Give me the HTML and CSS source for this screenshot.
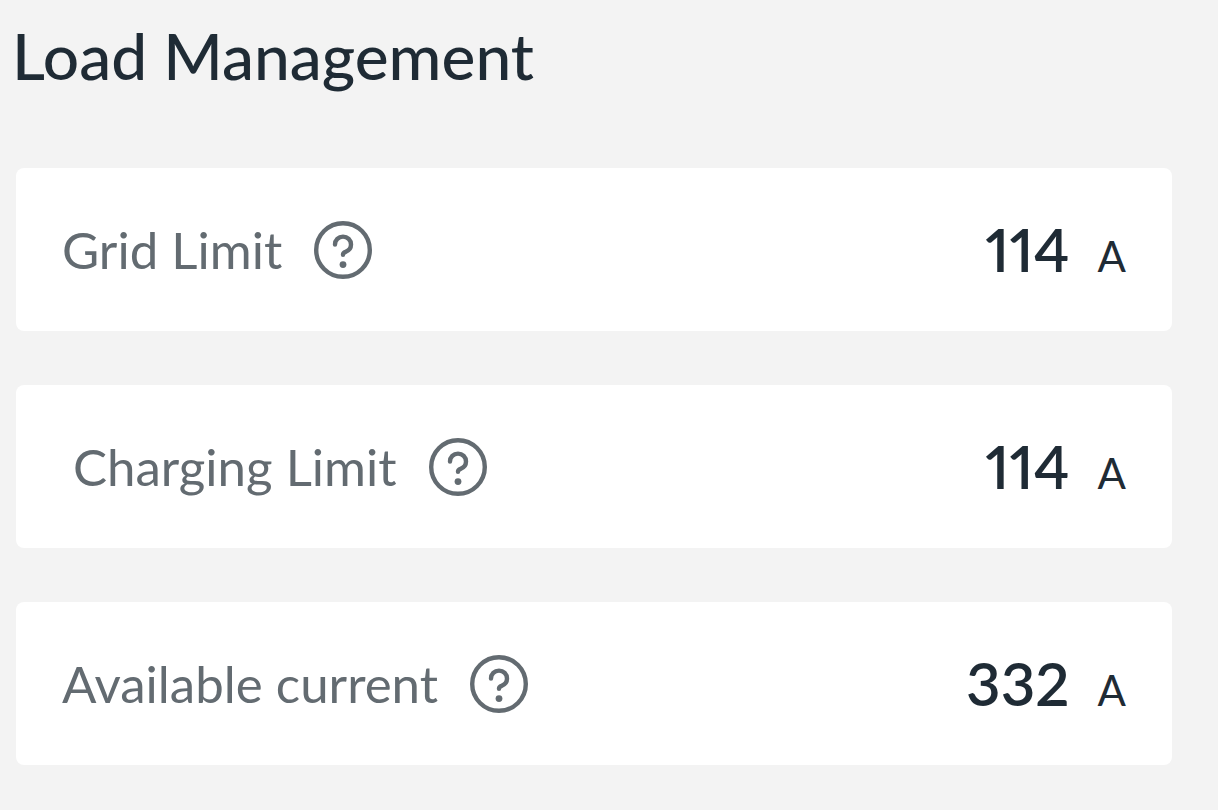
FILE: index.html
```html
<!DOCTYPE html>
<html lang="en">
<head>
<meta charset="utf-8">
<meta name="viewport" content="width=device-width, initial-scale=1">
<title>Load Management</title>
<link rel="stylesheet" href="styles.css">
</head>
<body>
<main class="page">
  <h1 class="title">Load Management</h1>
  <section class="cards">
    <article class="card">
      <h2 class="label">Grid Limit</h2>
      <button class="help" type="button" aria-label="About Grid Limit">
        <svg class="icon" viewBox="0 0 58 58" aria-hidden="true"><circle cx="29" cy="29" r="26.8"/><path d="M21 23.6C21 19 24.5 15.6 29 15.6s8 3.5 8 8c0 3.8-2.4 6.2-5.4 7.2-1.8.6-2.6 1.4-2.6 2.9"/><circle class="dot" cx="29" cy="43.6" r="3.4"/></svg>
      </button>
      <p class="reading"><span class="value">114</span><span class="unit">A</span></p>
    </article>
    <article class="card card-inset">
      <h2 class="label">Charging Limit</h2>
      <button class="help" type="button" aria-label="About Charging Limit">
        <svg class="icon" viewBox="0 0 58 58" aria-hidden="true"><circle cx="29" cy="29" r="26.8"/><path d="M21 23.6C21 19 24.5 15.6 29 15.6s8 3.5 8 8c0 3.8-2.4 6.2-5.4 7.2-1.8.6-2.6 1.4-2.6 2.9"/><circle class="dot" cx="29" cy="43.6" r="3.4"/></svg>
      </button>
      <p class="reading"><span class="value">114</span><span class="unit">A</span></p>
    </article>
    <article class="card">
      <h2 class="label">Available current</h2>
      <button class="help" type="button" aria-label="About Available current">
        <svg class="icon" viewBox="0 0 58 58" aria-hidden="true"><circle cx="29" cy="29" r="26.8"/><path d="M21 23.6C21 19 24.5 15.6 29 15.6s8 3.5 8 8c0 3.8-2.4 6.2-5.4 7.2-1.8.6-2.6 1.4-2.6 2.9"/><circle class="dot" cx="29" cy="43.6" r="3.4"/></svg>
      </button>
      <p class="reading"><span class="value">332</span><span class="unit">A</span></p>
    </article>
  </section>
</main>
</body>
</html>
```
FILE: styles.css
```css
* { box-sizing: border-box; }
body {
  margin: 0;
  background: #f3f3f3;
  color: #1f2b35;
  font-family: Lato, sans-serif;
}
.page { padding: 20px 46px 44px 12px; }
.title {
  margin: 0 0 76px;
  font-size: 64px;
  font-weight: 500;
  line-height: 72px;
}
.cards { display: grid; gap: 54px; margin-left: 4px; }
.card {
  display: flex;
  align-items: center;
  padding: 48px 46px;
  border-radius: 8px;
  background: #fff;
}
.card-inset { padding-left: 57px; }
.label {
  margin: 0;
  color: #636b71;
  font-size: 51px;
  font-weight: 400;
  line-height: 67px;
}
.help {
  display: flex;
  margin: 0 0 0 32px;
  padding: 0;
  border: 0;
  background: none;
  color: #636b71;
  cursor: pointer;
}
.icon {
  width: 58px;
  height: 58px;
  fill: none;
  stroke: currentColor;
  stroke-width: 4.4;
  stroke-linecap: round;
}
.dot { fill: currentColor; stroke: none; }
.reading {
  display: flex;
  align-items: baseline;
  gap: 28px;
  margin: 0 0 0 auto;
}
.value {
  font-size: 60px;
  font-weight: 600;
  font-variant-numeric: proportional-nums;
  line-height: 67px;
}
.unit { font-size: 42px; line-height: 48px; }
```
